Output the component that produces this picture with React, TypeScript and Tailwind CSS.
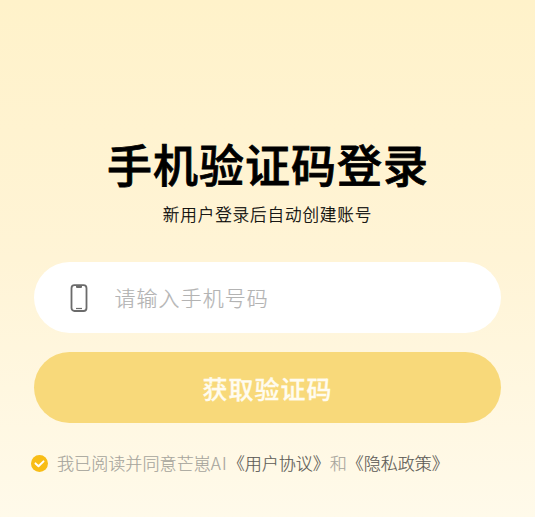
import { useState } from "react";

const LoginPage = () => {
  const [phone, setPhone] = useState("");
  const [agreed, setAgreed] = useState(true);

  return (
    <div className="flex h-screen w-full flex-col items-center bg-linear-to-b from-[#fff2ca] via-[#fff4d6] to-[#fffaea] pt-[131px] font-['Noto_Sans_CJK_SC',sans-serif]">
      <h1 className="h-[66px] pl-px text-[45px] leading-[66px] font-medium tracking-[1px] whitespace-nowrap text-black [-webkit-text-stroke:0.8px_black]">
        手机验证码登录
      </h1>
      <p className="mt-[5px] h-6 text-[16.6px] leading-6 font-light tracking-[0.85px] whitespace-nowrap text-black [-webkit-text-stroke:0.25px_black]">
        新用户登录后自动创建账号
      </p>
      <div className="mt-[36px] flex h-[71px] w-[467px] items-center rounded-full bg-white pl-[36px]">
        <svg className="h-7 w-[18px] shrink-0" viewBox="0 0 18 28" fill="none" stroke="#6b6b6b">
          <rect x="1.5" y="1.2" width="15" height="25.8" rx="3" strokeWidth="1.8" />
          <path d="M6 2h6v1a1 1 0 0 1-1 1H7a1 1 0 0 1-1-1z" fill="#6b6b6b" stroke="none" />
          <path d="M6 24.5h6" strokeWidth="1.2" />
        </svg>
        <input
          className="ml-[26.5px] w-[340px] text-[21px] font-light tracking-[1.05px] text-black outline-none [-webkit-text-stroke:0.2px_#b3b3b3] placeholder:text-[#b3b3b3]"
          type="tel"
          placeholder="请输入手机号码"
          value={phone}
          onChange={(e) => setPhone(e.target.value)}
        />
      </div>
      <button
        type="button"
        className="mt-[19px] h-[71px] w-[467px] rounded-full bg-[#f8d97a] pt-[2px] text-[25px] font-medium tracking-[1px] text-[#fffcf0] [-webkit-text-stroke:0.3px_#fffcf0]"
      >
        获取验证码
      </button>
      <div className="mt-[28px] flex h-6 w-full items-center pl-[31px] text-[17.1px] font-light whitespace-nowrap text-[#a6a49c] [-webkit-text-stroke:0.15px_currentColor]">
        <button type="button" className="mr-[9px] shrink-0" onClick={() => setAgreed(!agreed)}>
          <svg className="h-[17px] w-[17px]" viewBox="0 0 17 17" fill="none">
            <circle cx="8.5" cy="8.5" r="8.5" fill={agreed ? "#f8bd16" : "#ddd5bd"} />
            <path d="M4.5 8.4l3 2.8 5-4.8" stroke="white" strokeWidth="2" strokeLinecap="round" strokeLinejoin="round" />
          </svg>
        </button>
        <span>
          我已阅读并同意芒崽<span className="tracking-[1.1px]">AI</span>
        </span>
        <a className="tracking-[-0.1px] text-[#5c5a55]">《用户协议》</a>
        <span>和</span>
        <a className="tracking-[-0.1px] text-[#5c5a55]">《隐私政策》</a>
      </div>
    </div>
  );
};

export default LoginPage;
